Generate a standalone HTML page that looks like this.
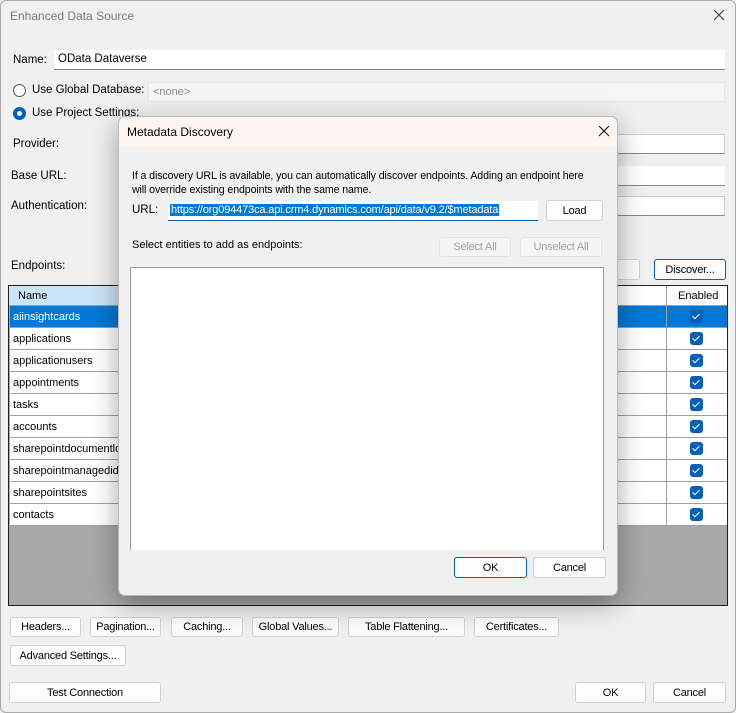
<!DOCTYPE html>
<html><head><style>
*{box-sizing:border-box;margin:0;padding:0}
body{width:736px;height:713px;background:#f0f0f0;font-family:"Liberation Sans",sans-serif;font-size:11.5px;color:#000;position:relative;overflow:hidden}
.a{position:absolute;white-space:nowrap}
.btn{position:absolute;background:#fdfdfd;border:1px solid #d0d0d0;border-radius:3px;text-align:center;font-size:11px;display:flex;align-items:center;justify-content:center;white-space:nowrap;letter-spacing:-.2px}
.dis{color:#a0a0a0;background:#f5f5f5;border-color:#e3e3e3}
.inp{position:absolute;background:#fff;border-bottom:1px solid #888;height:20px;padding-left:4px;line-height:19px}
.row{position:absolute;left:10px;width:717px;height:22px;border-bottom:1px solid #a0a0a0;background:#fff;font-size:11px}
.row span{position:absolute;left:3px;top:5px}
.cb{position:absolute;left:680px;top:4px;width:13px;height:13px;border-radius:3px;background:#005fb8}
.cb:after{content:"";position:absolute;left:4px;top:2px;width:3px;height:6px;border:solid #fff;border-width:0 1px 1px 0;transform:rotate(45deg)}
</style></head><body>
<div class="a" style="left:0;top:0;width:736px;height:713px;border:1px solid #aaa;border-radius:6px"></div>
<div class="a" style="left:10px;top:9px;color:#7a7a7a;font-size:12px">Enhanced Data Source</div>
<svg class="a" style="left:713px;top:9px" width="12" height="12"><path d="M1 1L11 11M11 1L1 11" stroke="#444" stroke-width="1.2"/></svg>
<div class="a" style="left:13px;top:54px">Name:</div>
<div class="inp" style="left:54px;top:50px;width:671px">OData Dataverse</div>
<div class="a" style="left:13px;top:84px;width:13px;height:13px;border:1px solid #555;border-radius:50%;background:#fff"></div>
<div class="a" style="left:32px;top:84px">Use Global Database:</div>
<div class="a" style="left:148px;top:82px;width:577px;height:20px;background:#f6f6f6;color:#888;padding:3px 4px;border:1px solid #e5e5e5;font-size:11px">&lt;none&gt;</div>
<div class="a" style="left:13px;top:107px;width:13px;height:13px;border-radius:50%;background:#005fb8"><div style="margin:4px;width:5px;height:5px;border-radius:50%;background:#fff"></div></div>
<div class="a" style="left:32px;top:107px">Use Project Settings:</div>
<div class="a" style="left:13px;top:138px">Provider:</div>
<div class="a" style="left:11px;top:170px">Base URL:</div>
<div class="a" style="left:11px;top:200px">Authentication:</div>
<div class="a" style="left:600px;top:134px;width:125px;height:20px;background:#fff;border:1px solid #ccc;border-bottom-color:#888"></div>
<div class="a" style="left:600px;top:166px;width:125px;height:20px;background:#fff;border-bottom:1px solid #888"></div>
<div class="a" style="left:600px;top:196px;width:125px;height:20px;background:#fff;border:1px solid #ccc;border-bottom-color:#888"></div>
<div class="a" style="left:11px;top:260px">Endpoints:</div>
<div class="btn" style="left:600px;top:259px;width:40px;height:21px"></div>
<div class="btn" style="left:654px;top:259px;width:72px;height:21px;border-color:#005fb8">Discover...</div>
<div class="a" style="left:8px;top:285px;width:720px;height:321px;border:1px solid #222;background:#a8a8a8"></div>
<div class="a" style="left:9px;top:286px;width:718px;height:20px;background:#fff;border-bottom:1px solid #a0a0a0"></div>
<div class="a" style="left:9px;top:286px;width:110px;height:19px;background:#cce4f7"></div>
<div class="a" style="left:18px;top:290px;font-size:11px">Name</div>
<div class="a" style="left:678px;top:290px;font-size:11px">Enabled</div>
<div class="row" style="top:306px;background:#0078d7;color:#fff"><span>aiinsightcards</span><div class="cb"></div></div>
<div class="row" style="top:328px"><span>applications</span><div class="cb"></div></div>
<div class="row" style="top:350px"><span>applicationusers</span><div class="cb"></div></div>
<div class="row" style="top:372px"><span>appointments</span><div class="cb"></div></div>
<div class="row" style="top:394px"><span>tasks</span><div class="cb"></div></div>
<div class="row" style="top:416px"><span>accounts</span><div class="cb"></div></div>
<div class="row" style="top:438px"><span>sharepointdocumentlo</span><div class="cb"></div></div>
<div class="row" style="top:460px"><span>sharepointmanagedide</span><div class="cb"></div></div>
<div class="row" style="top:482px"><span>sharepointsites</span><div class="cb"></div></div>
<div class="row" style="top:504px"><span>contacts</span><div class="cb"></div></div>
<div class="a" style="left:666px;top:286px;width:1px;height:240px;background:#a0a0a0"></div>
<div class="btn" style="left:10px;top:617px;width:71px;height:20px">Headers...</div>
<div class="btn" style="left:90px;top:617px;width:71px;height:20px">Pagination...</div>
<div class="btn" style="left:171px;top:617px;width:72px;height:20px">Caching...</div>
<div class="btn" style="left:252px;top:617px;width:87px;height:20px">Global Values...</div>
<div class="btn" style="left:348px;top:617px;width:117px;height:20px">Table Flattening...</div>
<div class="btn" style="left:474px;top:617px;width:85px;height:20px">Certificates...</div>
<div class="btn" style="left:10px;top:645px;width:116px;height:21px">Advanced Settings...</div>
<div class="btn" style="left:9px;top:682px;width:152px;height:21px">Test Connection</div>
<div class="btn" style="left:575px;top:682px;width:71px;height:21px">OK</div>
<div class="btn" style="left:653px;top:682px;width:73px;height:21px">Cancel</div>

<div class="a" style="left:118px;top:116px;width:500px;height:480px;background:#f0f0f0;border:1px solid #bbb;border-radius:7px;box-shadow:0 8px 28px rgba(0,0,0,.35)">
<div class="a" style="left:0;top:0;width:498px;height:30px;background:#fbf6f1;border-radius:7px 7px 0 0"></div>
<div class="a" style="left:8px;top:8px;font-size:12px">Metadata Discovery</div>
<svg class="a" style="left:479px;top:8px" width="12" height="12"><path d="M1 1L11 11M11 1L1 11" stroke="#222" stroke-width="1.2"/></svg>
<div class="a" style="left:13px;top:52px;font-size:10.6px;line-height:14px;letter-spacing:-.1px">If a discovery URL is available, you can automatically discover endpoints. Adding an endpoint here<br>will override existing endpoints with the same name.</div>
<div class="a" style="left:13px;top:87px">URL:</div>
<div class="a" style="left:49px;top:84px;width:370px;height:20px;background:#fff;border-bottom:1px solid #005fb8"><span style="background:#0078d7;color:#fff;padding:0 1px;position:absolute;top:3px;left:2px;font-size:11px;letter-spacing:-.15px">https://org094473ca.api.crm4.dynamics.com/api/data/v9.2/$metadata</span></div>
<div class="btn" style="left:427px;top:83px;width:57px;height:21px">Load</div>
<div class="a" style="left:13px;top:122px;font-size:11px">Select entities to add as endpoints:</div>
<div class="btn dis" style="left:320px;top:120px;width:72px;height:20px">Select All</div>
<div class="btn dis" style="left:401px;top:120px;width:82px;height:20px">Unselect All</div>
<div class="a" style="left:11px;top:150px;width:474px;height:283px;background:#fff;border:1px solid #999;border-bottom:none"></div>
<div class="btn" style="left:335px;top:440px;width:73px;height:21px;border-color:#005fb8">OK</div>
<div class="btn" style="left:414px;top:440px;width:73px;height:21px">Cancel</div>
</div>
</body></html>
